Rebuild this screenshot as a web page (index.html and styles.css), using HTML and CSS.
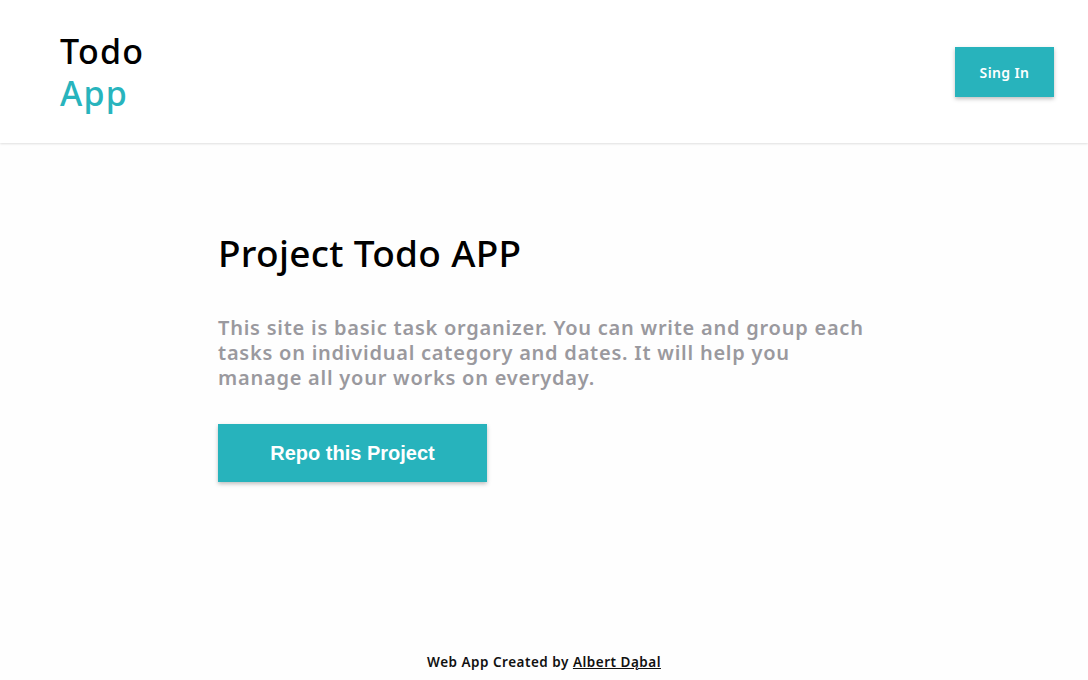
FILE: index.html
```html
<!DOCTYPE html>
<html lang="en">
<head>
<meta charset="utf-8">
<title>Todo App</title>
<link rel="stylesheet" href="styles.css">
</head>
<body>
<header class="topbar">
  <div class="logo">
    <span class="logo-top">Todo</span>
    <span class="logo-bottom">App</span>
  </div>
  <a class="signin" href="#">Sing In</a>
</header>
<main class="hero">
  <h1 class="title">Project Todo APP</h1>
  <p class="lead">This site is basic task organizer. You can write and group each tasks on individual category and dates. It will help you manage all your works on everyday.</p>
  <a class="repo" href="#">Repo this Project</a>
</main>
<footer class="footer">Web App Created by <a href="#">Albert Dąbal</a></footer>
</body>
</html>
```
FILE: styles.css
```css
* { box-sizing: border-box; }
html, body { margin: 0; height: 100%; }
body {
  font-family: "Noto Sans", "Open Sans", sans-serif;
  background: #fefefe;
  color: #000;
  display: flex;
  flex-direction: column;
  min-height: 680px;
}
.topbar {
  height: 143px;
  background: #fff;
  display: flex;
  align-items: center;
  justify-content: space-between;
  padding: 0 34px 0 60px;
  box-shadow: 0 1px 2px rgba(0,0,0,0.12);
  position: relative;
  z-index: 1;
}
.logo {
  display: flex;
  flex-direction: column;
  font-size: 34px;
  font-weight: 500;
  letter-spacing: 1.2px;
  line-height: 42px;
  margin-top: 0;
}
.logo-bottom { color: #28b4bd; }
.signin {
  background: #28b3bc;
  color: #fff;
  text-decoration: none;
  font-size: 14px;
  font-weight: 600;
  letter-spacing: 0.4px;
  width: 99px;
  height: 50px;
  display: flex;
  align-items: center;
  justify-content: center;
  box-shadow: 0 2px 4px rgba(0,0,0,0.25);
  margin-top: 1px;
}
.hero {
  flex: 1;
  padding: 88px 0 0 218px;
}
.title {
  margin: 0;
  font-size: 37px;
  font-weight: 500;
  letter-spacing: 0.3px;
  line-height: 44px;
}
.lead {
  margin: 40px 0 0;
  width: 660px;
  font-size: 20px;
  font-weight: 600;
  letter-spacing: 0.76px;
  line-height: 25px;
  color: #9a999e;
}
.repo {
  display: flex;
  align-items: center;
  justify-content: center;
  margin-top: 34px;
  width: 269px;
  height: 58px;
  background: #27b3bc;
  color: #fff;
  text-decoration: none;
  font-family: "Liberation Sans", Arial, sans-serif;
  font-weight: 700;
  font-size: 20px;
  box-shadow: 0 2px 4px rgba(0,0,0,0.25);
}
.footer {
  text-align: center;
  font-size: 13.5px;
  font-weight: 600;
  letter-spacing: 0.5px;
  padding-bottom: 9px;
  color: #111;
}
.footer a { color: #111; }
```
